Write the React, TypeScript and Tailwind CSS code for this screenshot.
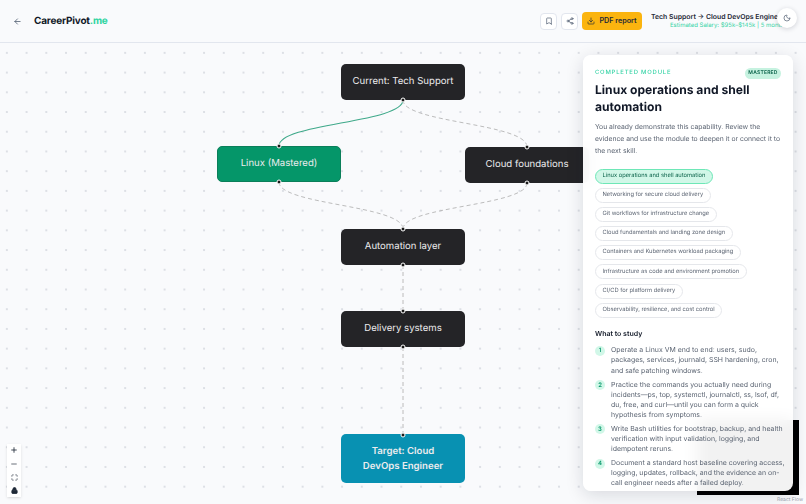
import React from "react";
import { ArrowLeft, Bookmark, Download, Lock, Maximize, Minus, Moon, Plus, Share2 } from "lucide-react";

const modules = [
  "Linux operations and shell automation",
  "Networking for secure cloud delivery",
  "Git workflows for infrastructure change",
  "Cloud fundamentals and landing zone design",
  "Containers and Kubernetes workload packaging",
  "Infrastructure as code and environment promotion",
  "CI/CD for platform delivery",
  "Observability, resilience, and cost control",
];

const study = [
  "Operate a Linux VM end to end: users, sudo, packages, services, journald, SSH hardening, cron, and safe patching windows.",
  "Practice the commands you actually need during incidents—ps, top, systemctl, journalctl, ss, lsof, df, du, free, and curl—until you can form a quick hypothesis from symptoms.",
  "Write Bash utilities for bootstrap, backup, and health verification with input validation, logging, and idempotent reruns.",
  "Document a standard host baseline covering access, logging, updates, rollback, and the evidence an on-call engineer needs after a failed deploy.",
];

const handles = [
  [403, 57],
  [279, 103],
  [279, 139],
  [527, 104],
  [527, 140],
  [403, 186],
  [403, 222],
  [403, 268],
  [403, 304],
  [403, 392],
];

const Node: React.FC<{ className: string; children: React.ReactNode }> = ({ className, children }) => (
  <div
    className={`absolute flex w-[124px] items-center justify-center rounded-[5px] text-center text-[9.6px] text-[#ececee] ${className}`}
  >
    {children}
  </div>
);

const App: React.FC = () => {
  return (
    <div className="relative h-[504px] w-[806px] overflow-hidden bg-[#f9fafc] font-['Inter',sans-serif] [text-rendering:geometricPrecision]">
      <header className="flex h-[43px] items-center border-b border-[#e2e6ee] pl-[13px]">
        <ArrowLeft className="size-[9px] text-[#475569]" strokeWidth={2} />
        <div className="ml-[12px] text-[10px] font-bold tracking-[-0.2px] text-[#111827]">
          CareerPivot<span className="text-[#2dd4a0]">.me</span>
        </div>
        <div className="ml-auto flex items-center">
          <button className="flex size-[17px] items-center justify-center rounded-[4px] border border-[#e2e6ee] bg-white">
            <Bookmark className="size-[8px] text-[#475569]" />
          </button>
          <button className="ml-[4px] flex size-[17px] items-center justify-center rounded-[4px] border border-[#e2e6ee] bg-white">
            <Share2 className="size-[8px] text-[#475569]" />
          </button>
          <button className="ml-[4px] flex h-[18px] w-[60px] items-center justify-center gap-[4px] rounded-[4px] bg-[#fbb40f] text-[7.2px] font-semibold text-[#1f2937]">
            <Download className="size-[8px]" />
            PDF report
          </button>
          <div className="ml-[9px] w-[155px] overflow-hidden whitespace-nowrap">
            <div className="text-[6.9px] leading-[10px] font-semibold text-[#1f2937]">
              Tech Support → Cloud DevOps Engineer
            </div>
            <div className="pl-[19px] text-[6px] leading-[8px] text-[#34d3a5]">
              Estimated Salary: $95k–$145k | 5 months
            </div>
          </div>
        </div>
      </header>

      <main className="relative h-[461px] bg-[radial-gradient(circle,#c0c5ce_0.5px,transparent_0.9px)] bg-[size:19.72px_19.72px] bg-[position:-3px_0px]">
        <svg className="absolute inset-0 size-full" fill="none">
          <path d="M403 57C403 80 279 80 279 103" stroke="#3fa98a" strokeWidth="1.1" />
          <g stroke="#b4b4b4" strokeWidth="0.9" strokeDasharray="4 3">
            <path d="M403 57C403 80 527 80 527 104" />
            <path d="M279 139C279 162 403 162 403 186" />
            <path d="M527 140C527 163 403 163 403 186" />
            <path d="M403 222V268" />
            <path d="M403 304V392" />
          </g>
        </svg>

        <Node className="top-[21px] left-[341px] h-[36px] bg-[#242427]">Current: Tech Support</Node>
        <Node className="top-[103px] left-[217px] h-[36px] border border-[#0b7f5a] bg-[#059669]">Linux (Mastered)</Node>
        <Node className="top-[104px] left-[465px] h-[36px] bg-[#242427]">Cloud foundations</Node>
        <Node className="top-[186px] left-[341px] h-[36px] bg-[#242427]">Automation layer</Node>
        <Node className="top-[268px] left-[341px] h-[36px] bg-[#242427]">Delivery systems</Node>
        <Node className="top-[391px] left-[341px] h-[49px] bg-[#0891b2] px-[12px] leading-[15px] font-semibold">
          Target: Cloud DevOps Engineer
        </Node>

        {handles.map(([x, y]) => (
          <span
            key={`${x}-${y}`}
            className="absolute size-[5px] -translate-x-1/2 -translate-y-1/2 rounded-full border border-white bg-[#1a1a1a]"
            style={{ left: x, top: y }}
          />
        ))}

        <div className="absolute bottom-[7px] left-[7px] flex w-[14px] flex-col bg-white text-[#1f2937] shadow-sm">
          <button className="flex h-[13.3px] items-center justify-center">
            <Plus className="size-[8px]" strokeWidth={2.5} />
          </button>
          <button className="flex h-[13.3px] items-center justify-center">
            <Minus className="size-[8px]" strokeWidth={2} />
          </button>
          <button className="flex h-[13.3px] items-center justify-center">
            <Maximize className="size-[7px]" strokeWidth={2} />
          </button>
          <button className="flex h-[13.3px] items-center justify-center">
            <Lock className="size-[7px] fill-[#1f2937]" strokeWidth={3} />
          </button>
        </div>

        <div className="absolute top-[377px] left-[697px] h-[75px] w-[102px] bg-black" />
        <div className="absolute right-[3px] bottom-0 text-[5px] text-[#9ca3af]">React Flow</div>
      </main>

      <button className="absolute top-[8px] right-[9px] flex size-[20px] items-center justify-center rounded-full bg-white shadow-[0_1px_5px_rgba(15,23,42,0.18)]">
        <Moon className="size-[8px] text-[#475569]" />
      </button>

      <aside className="absolute top-[55px] left-[583px] h-[436px] w-[210px] overflow-hidden rounded-[8px] bg-white/95 pt-[13px] pr-[12px] pl-[12px] shadow-[0_4px_18px_rgba(15,23,42,0.14)] backdrop-blur-sm">
        <div className="flex h-[11px] items-center justify-between">
          <span className="text-[5.9px] font-medium tracking-[0.8px] text-[#34d3a5]">COMPLETED MODULE</span>
          <span className="flex h-[11px] w-[36px] items-center justify-center rounded-full bg-[#c6f2e0] text-[5px] font-semibold tracking-[0.2px] text-[#065f46]">
            MASTERED
          </span>
        </div>
        <h2 className="mt-[3px] text-[12.1px] leading-[16.5px] font-bold text-[#111827]">
          Linux operations and shell automation
        </h2>
        <p className="mt-[6px] text-[6.8px] leading-[12px] text-[#5b6472]">
          You already demonstrate this capability. Review the evidence and use the module to deepen it or connect it to the next skill.
        </p>
        <div className="mt-[11.5px] flex flex-col items-start gap-[4.2px]">
          {modules.map((m, i) => (
            <span
              key={m}
              className={`flex h-[15px] items-center rounded-full border px-[6.5px] text-[5.75px] whitespace-nowrap ${
                i === 0
                  ? "border-[#6ee7b7] bg-[#d1f7e8] text-[#065f46]"
                  : "border-[#e5e7eb] bg-white text-[#5b6472]"
              }`}
            >
              {m}
            </span>
          ))}
        </div>
        <h3 className="mt-[11.5px] text-[7px] leading-[10px] font-semibold text-[#111827]">What to study</h3>
        <ol className="mt-[6px] -mr-[6px] flex flex-col gap-[4px]">
          {study.map((s, i) => (
            <li key={s} className="flex items-start gap-[6px]">
              <span className="mt-[0.5px] flex size-[10px] shrink-0 items-center justify-center rounded-full bg-[#d1f7e8] text-[6px] font-semibold text-[#059669]">
                {i + 1}
              </span>
              <span className="text-[6.95px] leading-[10.1px] text-[#5b6472]">{s}</span>
            </li>
          ))}
        </ol>
      </aside>
    </div>
  );
};

export default App;
